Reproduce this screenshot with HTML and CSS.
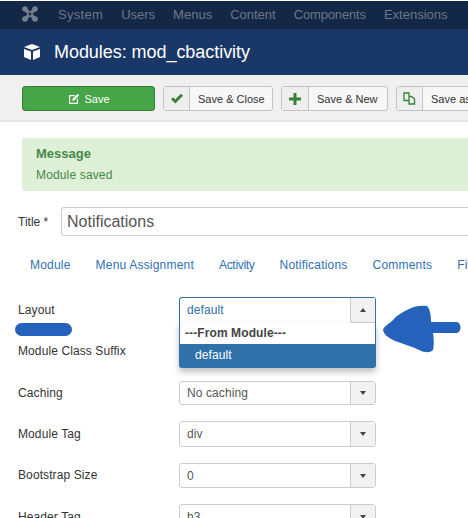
FILE: index.html
```html
<!DOCTYPE html>
<html lang="en">
<head>
<meta charset="utf-8">
<title>Modules: mod_cbactivity</title>
<link rel="stylesheet" href="styles.css">
</head>
<body>
<nav class="nav">
  <svg class="logo" viewBox="0 0 16 16" width="16" height="16"><g fill="none" stroke="#75808f" stroke-width="3.6"><path d="M3 3 L13 13 M13 3 L3 13"/></g><g fill="#75808f"><circle cx="3" cy="3" r="2.8"/><circle cx="13" cy="3" r="2.8"/><circle cx="3" cy="13" r="2.8"/><circle cx="13" cy="13" r="2.8"/></g><rect x="6.8" y="6.8" width="2.4" height="2.4" fill="#132746" transform="rotate(45 8 8)"/></svg>
  <span class="nav-wide">System</span><span>Users</span><span>Menus</span><span>Content</span><span class="nav-tight">Components</span><span>Extensions</span>
</nav>
<header class="head">
  <svg class="cube" viewBox="0 0 18 18" width="18" height="18"><path fill="#fff" d="M9 1 L17 4 L9 7 L1 4 Z M1 6 L8 8.6 V17 L1 14 Z M17 6 L10 8.6 V17 L17 14 Z"/></svg>
  <h1>Modules: mod_cbactivity</h1>
</header>
<div class="toolbar">
  <button class="btn-save"><svg viewBox="0 0 12 12" width="12" height="12"><path fill="#fff" d="M1 2 H7 L5.8 3.2 H2.2 V9.8 H8.8 V6.4 L10 5.2 V11 H1 Z M4.5 5.8 L9.5 .8 L11.2 2.5 L6.2 7.5 L4.5 7.8 Z"/></svg>Save</button>
  <button class="btn btn-close"><span class="ico"><svg viewBox="0 0 14 12" width="14" height="12"><path fill="#378137" d="M1 6.2 L3 4.2 L5.3 6.5 L11 .8 L13 2.8 L5.3 10.6 Z"/></svg></span><span class="lbl">Save &amp; Close</span></button>
  <button class="btn btn-new"><span class="ico"><svg viewBox="0 0 12 12" width="12" height="12"><path fill="#378137" d="M4.5 0 H7.5 V4.5 H12 V7.5 H7.5 V12 H4.5 V7.5 H0 V4.5 H4.5 Z"/></svg></span><span class="lbl">Save &amp; New</span></button>
  <button class="btn btn-as"><span class="ico"><svg viewBox="0 0 13 13" width="13" height="13"><path fill="none" stroke="#378137" stroke-width="1.3" d="M1 1 H6 V8.5 H1 Z M6 4.5 H8.5 L11.5 7 V12 H6 V8.5"/></svg></span><span class="lbl">Save as Copy</span></button>
</div>
<main class="content">
  <div class="alert">
    <h4>Message</h4>
    <p>Module saved</p>
  </div>
  <div class="title-row">
    <label>Title *</label>
    <div class="title-input">Notifications</div>
  </div>
  <ul class="tabs">
    <li>Module</li><li>Menu Assignment</li><li class="tab-narrow">Activity</li><li>Notifications</li><li>Comments</li><li>Fields</li>
  </ul>
  <div class="form">
    <div class="row">
      <label>Layout</label>
      <div class="select open"><span class="val blue">default</span><span class="arrow"><i class="up"></i></span>
        <div class="menu">
          <div class="group">---From Module---</div>
          <div class="opt">default</div>
        </div>
      </div>
    </div>
    <div class="row row-suffix"><label>Module Class Suffix</label></div>
    <div class="row row-caching"><label>Caching</label><div class="select"><span class="val">No caching</span><span class="arrow"><i></i></span></div></div>
    <div class="row row-tag"><label>Module Tag</label><div class="select"><span class="val">div</span><span class="arrow"><i></i></span></div></div>
    <div class="row row-size"><label>Bootstrap Size</label><div class="select"><span class="val">0</span><span class="arrow"><i></i></span></div></div>
    <div class="row"><label>Header Tag</label><div class="select"><span class="val">h3</span><span class="arrow"><i></i></span></div></div>
  </div>
</main>
<div class="scribble"></div>
<svg class="pointer" viewBox="0 0 78 48" width="78" height="48"><path fill="#2562bb" d="M0 25 C1 21 6 19 10 15 C14 10 20 7 26 4 C31 1 38 0 44 1 C47 4 48 10 48 17 H73 C79 17 79 28 73 28 H50 C51 34 51 41 50 45 C47 48 42 48 36 45 C28 41 20 39 12 36 C6 33 1 30 0 25 Z"/></svg>
</body>
</html>
```
FILE: styles.css
```css
* { box-sizing: border-box; }
html, body { margin: 0; height: 518px; overflow: hidden; background: #fff; }
body { position: relative; font-family: "Liberation Sans", Arial, sans-serif; font-size: 12px; color: #333; padding-top: 1px; }

.nav { height: 28px; background: #132746; display: flex; align-items: center; padding: 0 0 2px 22px; color: #6d7787; font-size: 13px; }
.nav .logo { margin-right: 20px; }
.nav span { margin-right: 18px; }
.nav .nav-wide { letter-spacing: .3px; }
.nav .nav-tight { letter-spacing: -.15px; }

.head { height: 46px; background: #1a3867; display: flex; align-items: center; padding-left: 23px; color: #fff; }
.head .cube { margin-right: 13px; }
.head h1 { margin: 1px 0 0; font-size: 18px; font-weight: 400; letter-spacing: -.05px; }

.toolbar { height: 47px; background: #f0f0f0; border-bottom: 2px solid #e4e4e4; display: flex; gap: 8px; padding: 11px 0 0 22px; overflow: hidden; }
.toolbar button { font: inherit; font-size: 11px; height: 25px; padding: 0; border-radius: 3px; flex: none; display: flex; align-items: center; }
.btn-save { width: 133px; background: #46a546; border: 1px solid #378137; color: #fff; justify-content: center; gap: 4px; }
.btn-save svg { margin-left: 1px; }
.btn { background: #f7f7f7; border: 1px solid #c4c4c4; color: #333; }
.btn .ico { width: 26px; height: 100%; background: #eee; border-right: 1px solid #c4c4c4; display: flex; align-items: center; justify-content: center; flex: none; }
.btn .lbl { padding: 0 8px; white-space: nowrap; }
.btn-close { width: 110px; }
.btn-new { width: 107px; }
.btn-new .ico { width: 27px; }
.btn-as { width: 110px; }

.content { padding: 16px 0 0 18px; }
.alert { margin-left: 4px; margin-right: -4px; height: 53px; background: #dff0d8; border-radius: 3px 0 0 3px; padding: 8px 14px; color: #468847; }
.alert h4 { margin: 0; font-size: 13px; line-height: 15px; }
.alert p { margin: 6px 0 0; line-height: 16px; letter-spacing: .15px; }

.title-row { display: flex; align-items: center; margin-top: 16px; }
.title-row label { width: 43px; }
.title-input { flex: 1; height: 29px; border: 1px solid #ccc; border-right: 0; border-radius: 3px 0 0 3px; padding-left: 5px; font-size: 16px; line-height: 27px; color: #555; }

.tabs { display: flex; gap: 25px; list-style: none; margin: 21px 0 0 12px; padding: 0; color: #3071b3; line-height: 16px; white-space: nowrap; overflow: hidden; letter-spacing: .2px; }
.tabs .tab-narrow { letter-spacing: -.3px; }

.form { margin-top: 24px; }
.row { display: flex; align-items: center; height: 26px; margin-bottom: 15px; letter-spacing: .1px; }
.row label { width: 161px; flex: none; }
.row-suffix { margin-bottom: 17px; }
.row-caching { height: 24px; margin-bottom: 16px; }
.row-tag { margin-bottom: 16px; }
.row-size { height: 25px; margin-bottom: 16px; }
.row-size label { margin-bottom: 1px; }
.select { position: relative; width: 197px; height: 100%; border: 1px solid #ccc; border-radius: 3px; display: flex; background: #fff; color: #555; }
.val { flex: 1; padding-left: 7px; line-height: 22px; }
.row-tag .val, .row-size .val, .row:last-child .val, .val.blue { line-height: 24px; }
.val.blue { color: #3071a9; }
.arrow { width: 25px; background: #f2f2f2; border-left: 1px solid #ccc; display: flex; align-items: center; justify-content: center; flex: none; }
.arrow i { width: 0; height: 0; border: 3.5px solid transparent; border-top: 4px solid #444; border-bottom: 0; }
.arrow i.up { border-top: 0; border-bottom: 4px solid #444; }

.select.open { border-color: #3071a9; border-radius: 3px 3px 0 0; border-bottom: 0; }
.select.open .arrow { border-bottom: 1px solid #ccc; border-radius: 0 0 0 3px; }
.menu { position: absolute; z-index: 2; left: -1px; right: -1px; top: 25px; background: #fff; border: 1px solid #3071a9; border-top: 0; border-radius: 0 0 3px 3px; box-shadow: 0 4px 6px rgba(0,0,0,.25); }
.group { height: 21px; line-height: 21px; padding-left: 5px; font-weight: 700; color: #444; }
.opt { height: 23px; line-height: 22px; padding-left: 15px; background: #3071a9; color: #fff; }

.scribble { position: absolute; left: 15px; top: 323px; width: 57px; height: 13px; border-radius: 7px; background: #2562bb; }
.pointer { position: absolute; left: 383px; top: 305px; }
```
